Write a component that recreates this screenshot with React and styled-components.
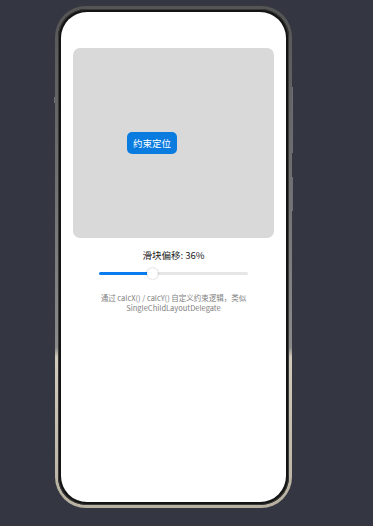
import React, { useState } from "react";
import styled, { createGlobalStyle } from "styled-components";

const GlobalStyle = createGlobalStyle`
  html, body {
    margin: 0;
    padding: 0;
    background: #343741;
  }
  body {
    font-family: "Noto Sans CJK SC", "Noto Sans", sans-serif;
  }
`;

function App() {
  const [offset] = useState(36);

  return (
    <>
      <GlobalStyle />
      <Page>
        <Phone>
          <SideKey side="left" top={88} length={6} />
          <SideKey side="right" top={78} length={66} />
          <SideKey side="right" top={168} length={34} />
          <Screen>
            <Canvas>
              <PinButton
                style={{ left: `${54 + (offset - 36) * 1.2}px`, top: "84px" }}
              >
                约束定位
              </PinButton>
            </Canvas>
            <OffsetLabel>滑块偏移: {offset}%</OffsetLabel>
            <Slider>
              <Fill style={{ width: `${offset}%` }} />
              <Thumb />
              <Rest />
            </Slider>
            <Caption>
              <CaptionLine>通过 calcX() / calcY() 自定义约束逻辑，类似</CaptionLine>
              <CaptionLine>SingleChildLayoutDelegate</CaptionLine>
            </Caption>
          </Screen>
        </Phone>
      </Page>
    </>
  );
}

export default App;

const Page = styled.div`
  width: 373px;
  height: 526px;
  padding: 6px 0 0 55px;
  box-sizing: border-box;
  overflow: hidden;
`;

const Phone = styled.div`
  position: relative;
  width: 237px;
  height: 502px;
  box-sizing: border-box;
  padding: 3px;
  border-radius: 31px;
  background:
    linear-gradient(#141414, #141414) padding-box,
    linear-gradient(
        180deg,
        #555555 0%,
        #8a8a8a 68%,
        #d2cbbb 70%,
        #b8b1a1 100%
      )
      border-box;
  border: 3px solid transparent;
  box-shadow: inset 0 0 0 1px #3a3a3a;
`;

const SideKey = styled.span`
  position: absolute;
  ${({ side }) => (side === "left" ? "left: -4px;" : "right: -4px;")}
  top: ${({ top }) => top}px;
  width: 1px;
  height: ${({ length }) => length}px;
  background: #6b6e75;
`;

const Screen = styled.div`
  height: 100%;
  box-sizing: border-box;
  background: #ffffff;
  border-radius: 26px;
  padding: 36px 12px 0;
  display: flex;
  flex-direction: column;
  align-items: center;
  overflow: hidden;
`;

const Canvas = styled.div`
  position: relative;
  width: 201px;
  height: 190px;
  flex-shrink: 0;
  background: #d9d9d9;
  border-radius: 7px;
`;

const PinButton = styled.button`
  position: absolute;
  width: 50px;
  height: 22px;
  padding: 0;
  border: none;
  border-radius: 5px;
  background: #0a7ce0;
  color: #ffffff;
  font-family: "Noto Sans CJK SC", sans-serif;
  font-size: 9.5px;
  line-height: 22px;
  text-align: center;
`;

const OffsetLabel = styled.div`
  margin-top: 11px;
  font-size: 9.5px;
  line-height: 13px;
  color: #222;
`;

const Slider = styled.div`
  width: 149px;
  height: 14px;
  margin-top: 4px;
  display: flex;
  align-items: center;
`;

const Fill = styled.div`
  height: 3px;
  flex-shrink: 0;
  border-radius: 2px 0 0 2px;
  background: #0a7cf0;
`;

const Rest = styled.div`
  flex: 1;
  height: 3px;
  border-radius: 0 2px 2px 0;
  background: #e6e6e6;
`;

const Thumb = styled.div`
  width: 11px;
  height: 11px;
  flex-shrink: 0;
  margin: 0 -5.5px;
  border-radius: 50%;
  background: #ffffff;
  box-shadow: 0 0 2px rgba(0, 0, 0, 0.3);
  z-index: 1;
`;

const Caption = styled.div`
  margin-top: 13px;
  display: flex;
  flex-direction: column;
  align-items: center;
  color: #808080;
`;

const CaptionLine = styled.div`
  font-size: 7.5px;
  line-height: 10px;
  white-space: nowrap;
`;
